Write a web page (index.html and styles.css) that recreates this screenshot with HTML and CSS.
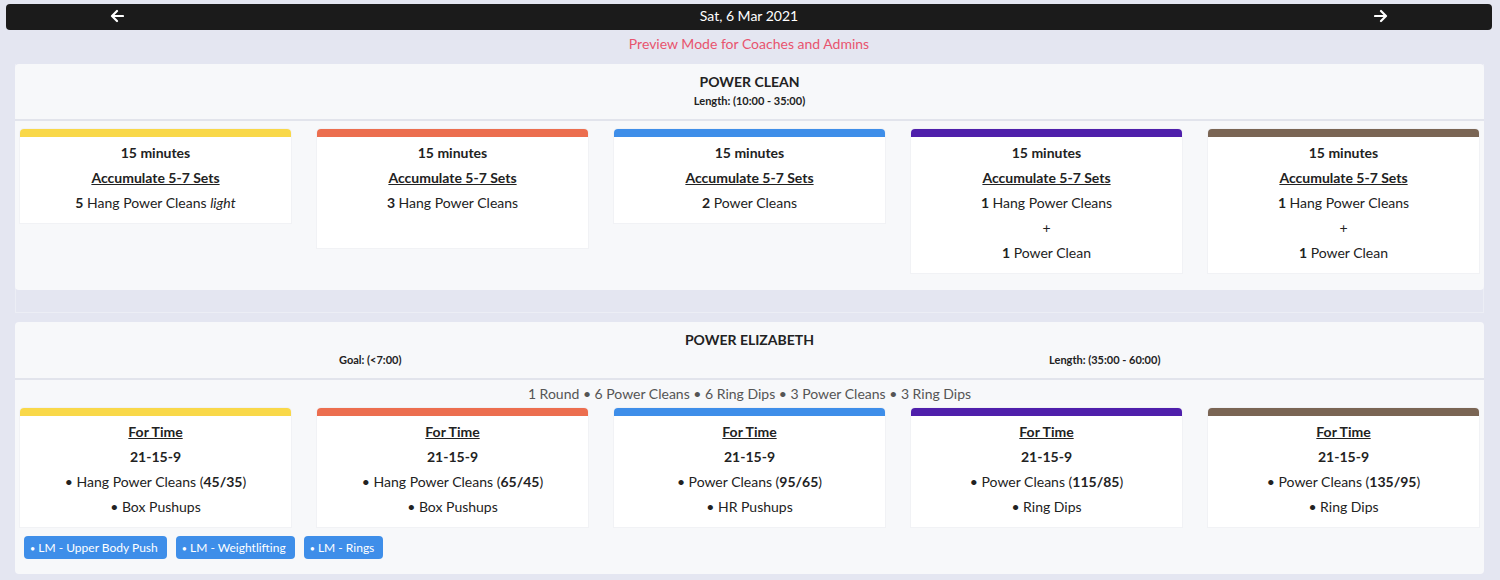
FILE: index.html
```html
<!DOCTYPE html>
<html>
<head>
<meta charset="utf-8">
<link rel="stylesheet" href="styles.css">
</head>
<body>
<div class="page">
  <div class="datebar">
    <span class="nav"><svg width="14" height="14" viewBox="0 0 14 14"><path d="M13 7H2.5M7 2L2 7l5 5" fill="none" stroke="#fff" stroke-width="2.2" stroke-linecap="round" stroke-linejoin="round"/></svg></span>
    <span class="date">Sat, 6 Mar 2021</span>
    <span class="nav"><svg width="14" height="14" viewBox="0 0 14 14"><path d="M1 7h10.5M7 2l5 5-5 5" fill="none" stroke="#fff" stroke-width="2.2" stroke-linecap="round" stroke-linejoin="round"/></svg></span>
  </div>
  <div class="preview">Preview Mode for Coaches and Admins</div>

  <div class="wrap">
    <div class="section">
      <div class="head">
        <div class="title">POWER CLEAN</div>
        <div class="meta">Length: (10:00 - 35:00)</div>
      </div>
      <div class="cards">
        <div class="card c1"><div class="bar"></div><div class="body">
          <p><b>15 minutes</b></p><p><b><u>Accumulate 5-7 Sets</u></b></p><p><b>5</b> Hang Power Cleans <i>light</i></p>
        </div></div>
        <div class="card c2"><div class="bar"></div><div class="body">
          <p><b>15 minutes</b></p><p><b><u>Accumulate 5-7 Sets</u></b></p><p><b>3</b> Hang Power Cleans</p><p>&nbsp;</p>
        </div></div>
        <div class="card c3"><div class="bar"></div><div class="body">
          <p><b>15 minutes</b></p><p><b><u>Accumulate 5-7 Sets</u></b></p><p><b>2</b> Power Cleans</p>
        </div></div>
        <div class="card c4"><div class="bar"></div><div class="body">
          <p><b>15 minutes</b></p><p><b><u>Accumulate 5-7 Sets</u></b></p><p><b>1</b> Hang Power Cleans</p><p>+</p><p><b>1</b> Power Clean</p>
        </div></div>
        <div class="card c5"><div class="bar"></div><div class="body">
          <p><b>15 minutes</b></p><p><b><u>Accumulate 5-7 Sets</u></b></p><p><b>1</b> Hang Power Cleans</p><p>+</p><p><b>1</b> Power Clean</p>
        </div></div>
      </div>
    </div>
  </div>

  <div class="section second">
    <div class="head">
      <div class="title">POWER ELIZABETH</div>
      <div class="metarow">
        <div class="meta">Goal: (&lt;7:00)</div>
        <div class="meta">Length: (35:00 - 60:00)</div>
      </div>
    </div>
    <div class="summary">1 Round • 6 Power Cleans • 6 Ring Dips • 3 Power Cleans • 3 Ring Dips</div>
    <div class="cards tight">
      <div class="card c1"><div class="bar"></div><div class="body">
        <p><b><u>For Time</u></b></p><p><b>21-15-9</b></p><p>• Hang Power Cleans (<b>45/35</b>)</p><p>• Box Pushups</p>
      </div></div>
      <div class="card c2"><div class="bar"></div><div class="body">
        <p><b><u>For Time</u></b></p><p><b>21-15-9</b></p><p>• Hang Power Cleans (<b>65/45</b>)</p><p>• Box Pushups</p>
      </div></div>
      <div class="card c3"><div class="bar"></div><div class="body">
        <p><b><u>For Time</u></b></p><p><b>21-15-9</b></p><p>• Power Cleans (<b>95/65</b>)</p><p>• HR Pushups</p>
      </div></div>
      <div class="card c4"><div class="bar"></div><div class="body">
        <p><b><u>For Time</u></b></p><p><b>21-15-9</b></p><p>• Power Cleans (<b>115/85</b>)</p><p>• Ring Dips</p>
      </div></div>
      <div class="card c5"><div class="bar"></div><div class="body">
        <p><b><u>For Time</u></b></p><p><b>21-15-9</b></p><p>• Power Cleans (<b>135/95</b>)</p><p>• Ring Dips</p>
      </div></div>
    </div>
    <div class="tags">
      <span class="tag"><span class="dot">•</span> LM - Upper Body Push</span>
      <span class="tag"><span class="dot">•</span> LM - Weightlifting</span>
      <span class="tag"><span class="dot">•</span> LM - Rings</span>
    </div>
  </div>
</div>
</body>
</html>
```

FILE: styles.css
```css
* { box-sizing: border-box; }
html, body { margin: 0; padding: 0; }
body {
  background: #e4e6f1;
  font-family: "Lato", "Noto Sans", sans-serif;
  font-size: 14px;
  color: #222;
  width: 1500px;
  height: 580px;
  overflow: hidden;
}
.page { padding: 4px 8px 0 6px; }
.datebar {
  height: 26px;
  background: #1b1b1b;
  border-radius: 4px;
  display: grid;
  grid-template-columns: 1fr auto 1fr;
  align-items: center;
  color: #fff;
  font-size: 14px;
  padding-bottom: 3px;
}
.datebar .nav { display: flex; justify-content: center; padding-top: 1px; }
.datebar .nav:first-child { justify-content: flex-start; padding-left: 104px; }
.datebar .nav:last-child { justify-content: flex-end; padding-right: 104px; }
.date { text-align: center; }
.preview {
  color: #e8546e;
  text-align: center;
  font-size: 14px;
  line-height: 20px;
  padding: 4px 0 0;
  height: 34px;
}
.wrap {
  margin: 0 8px 0 9px;
  border: 1px solid #eceef5;
  border-top: none;
  height: 249px;
}
.section {
  background: #f7f8fa;
  border-radius: 4px;
  padding: 0 5px 17px;
}
.wrap .section { margin: 0 -1px; }
.second { margin: 9px 8px 0 9px; padding-bottom: 15px; }
.head {
  margin: 0 -5px;
  text-align: center;
  border-bottom: 2px solid #e2e4ec;
  padding: 10px 0 0;
}
.title { font-weight: 700; font-size: 14px; line-height: 16px; }
.meta { font-weight: 700; font-size: 11px; line-height: 14px; padding: 4px 0 11px; }
.metarow {
  display: grid;
  grid-template-columns: 1fr 1fr;
  margin: 0 12px 0 -12px;
}
.metarow .meta { padding: 5px 0 11px; }
.summary {
  text-align: center;
  color: #555;
  font-size: 14px;
  line-height: 20px;
  padding: 4px 0 4px;
}
.cards {
  display: grid;
  grid-template-columns: repeat(5, 271px);
  gap: 26px;
  align-items: start;
  padding-top: 8px;
}
.cards.tight { padding-top: 0; }
.card { background: #fff; border-radius: 4px 4px 0 0; box-shadow: 0 0 0 1px #f1f2f5; }
.bar { height: 8px; border-radius: 4px 4px 0 0; }
.c1 .bar { background: #f9d849; }
.c2 .bar { background: #ec6e4f; }
.c3 .bar { background: #3e8ee9; }
.c4 .bar { background: #4f1fab; }
.c5 .bar { background: #7a6554; }
.body { text-align: center; padding: 6px 5px 5px; }
.body p { margin: 0 0 5px; line-height: 20px; }
.body b { font-weight: 700; }
.tags { display: flex; gap: 9px; padding: 9px 0 0 4px; }
.tag {
  background: #3e8ee9;
  color: #fff;
  font-size: 12px;
  line-height: 23px;
  height: 23px;
  padding: 0 9px 0 6px;
  border-radius: 4px;
}
.tag .dot { font-size: 9px; }
```
